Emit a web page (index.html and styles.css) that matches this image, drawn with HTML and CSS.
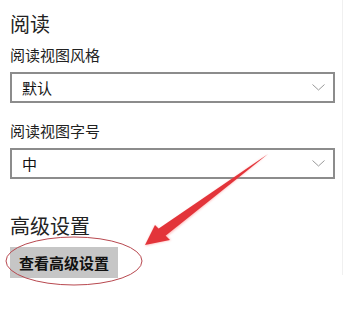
FILE: index.html
```html
<!DOCTYPE html>
<html lang="zh-CN">
<head>
  <meta charset="utf-8">
  <title>阅读设置</title>
  <link rel="stylesheet" href="styles.css">
</head>
<body>
  <div class="settings">
    <div class="panel">
      <h2 class="section-title">阅读</h2>
      <div class="field-label">阅读视图风格</div>
      <div class="dropdown">
        <span>默认</span>
        <svg class="chevron" width="13" height="7" viewBox="0 0 13 7"><path d="M0.5 0.5 L6.5 6 L12.5 0.5" fill="none" stroke="#999" stroke-width="1"/></svg>
      </div>
      <div class="field-label spaced">阅读视图字号</div>
      <div class="dropdown">
        <span>中</span>
        <svg class="chevron" width="13" height="7" viewBox="0 0 13 7"><path d="M0.5 0.5 L6.5 6 L12.5 0.5" fill="none" stroke="#999" stroke-width="1"/></svg>
      </div>
      <h2 class="section-title advanced">高级设置</h2>
      <div class="button">查看高级设置</div>
    </div>

    <!-- annotation drawn over the screenshot -->
    <svg class="markup" width="345" height="314" viewBox="0 0 345 314">
      <defs>
        <filter id="glow" x="-20%" y="-20%" width="140%" height="140%">
          <feGaussianBlur stdDeviation="1.2"/>
        </filter>
      </defs>
      <ellipse cx="74" cy="261" rx="68" ry="24" fill="none" stroke="#b8484f" stroke-width="1"/>
      <g filter="url(#glow)" opacity="0.5">
        <path d="M268 154 L159 230 L165 238 Z" fill="#ff8080"/>
        <path d="M145 246 L155 225 L171 240 Z" fill="#ff8080"/>
      </g>
      <path d="M268 154 L158 229 L164 237 Z" fill="#e3343a"/>
      <path d="M145 245 L155 225 L170 240 Z" fill="#e3343a"/>
    </svg>
  </div>
</body>
</html>
```

FILE: styles.css
```css
body {
  margin: 0;
  background: #fff;
  font-family: "Noto Sans CJK SC", "Noto Sans", sans-serif;
  color: #1a1a1a;
}

.settings {
  position: relative;
  width: 345px;
  height: 314px;
  overflow: hidden;
}

.panel {
  width: 332px;
  height: 265px;
  padding: 10px 0 0 10px;
  border-right: 1px solid #f0f0f0;
}

.section-title {
  margin: 0;
  font-size: 20px;
  font-weight: normal;
  line-height: 28px;
  color: #222;
}

.field-label {
  margin-top: 7px;
  font-size: 15px;
  line-height: 20px;
  color: #222;
}

.field-label.spaced {
  margin-top: 18px;
}

.dropdown {
  display: flex;
  align-items: center;
  justify-content: space-between;
  box-sizing: border-box;
  width: 325px;
  height: 31px;
  margin-top: 7px;
  padding: 0 8px 0 10px;
  border: 2px solid #8c8c8c;
  font-size: 15px;
  color: #111;
}

.chevron {
  display: block;
}

.section-title.advanced {
  margin-top: 33px;
}

.button {
  display: flex;
  align-items: center;
  justify-content: center;
  width: 108px;
  height: 31px;
  margin-top: 7px;
  background: #c6c6c6;
  font-size: 15px;
  font-weight: bold;
  color: #111;
}

.markup {
  position: absolute;
  left: 0;
  top: 0;
  pointer-events: none;
}
```
